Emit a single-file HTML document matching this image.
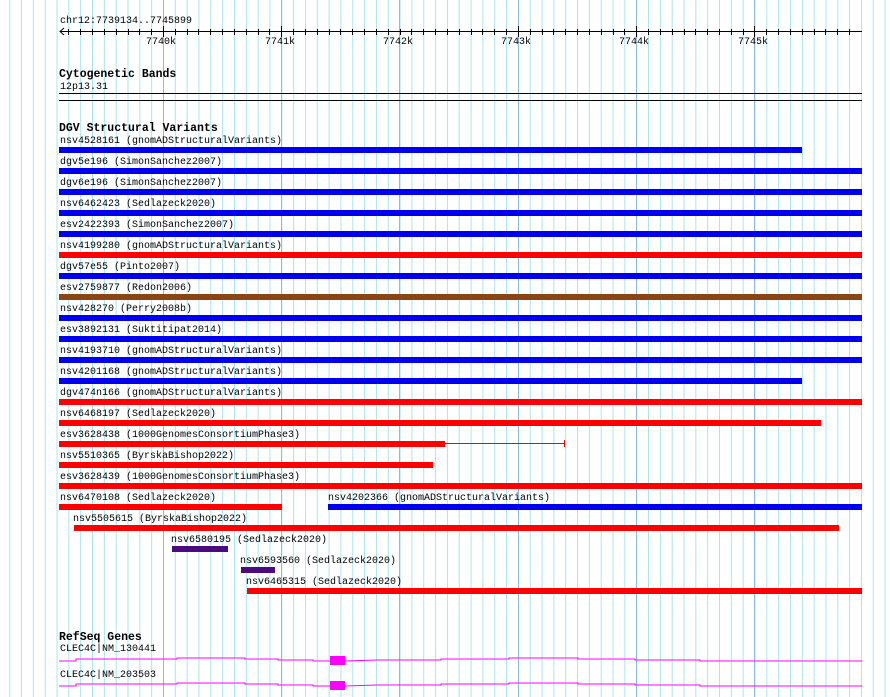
<!DOCTYPE html>
<html><head><meta charset="utf-8"><style>
body{margin:0;width:890px;height:697px;background:#fff;position:relative;overflow:hidden;font-family:"Liberation Mono",monospace;}
.t{position:absolute;font-size:10px;line-height:11px;white-space:pre;color:#000;margin-top:1px;}
.h{position:absolute;font-size:11.5px;line-height:12px;font-weight:bold;white-space:pre;margin-top:1px;}
.b{position:absolute;height:6px;}
.bl{background:#0000ee}.rd{background:#ff0000}.br{background:#8b4513}.pu{background:#4b0a80}
</style></head><body>
<svg width="890" height="697" style="position:absolute;left:0;top:0">
<defs><pattern id="g" x="9.2" y="0" width="11.83" height="697" patternUnits="userSpaceOnUse"><rect x="0" y="0" width="1" height="697" fill="#a8e6ee"/></pattern></defs>
<rect x="0" y="0" width="890" height="697" fill="url(#g)"/>
<g fill="#88bde0"><rect x="163" y="0" width="1" height="697"/><rect x="281" y="0" width="1" height="697"/><rect x="399" y="0" width="1" height="697"/><rect x="518" y="0" width="1" height="697"/><rect x="636" y="0" width="1" height="697"/><rect x="754" y="0" width="1" height="697"/></g>
<line x1="60" y1="31.5" x2="862" y2="31.5" stroke="#000"/>
<polyline points="64,28 60,31.5 64,35" fill="none" stroke="#000"/>
<g id="tk" stroke="#000"></g>
<line x1="59" y1="93.5" x2="862" y2="93.5" stroke="#000"/>
<line x1="59" y1="100.5" x2="862" y2="100.5" stroke="#000"/>
<line x1="445" y1="443.5" x2="565" y2="443.5" stroke="#ff0000"/>
<line x1="564.5" y1="440" x2="564.5" y2="447" stroke="#ff0000"/>
<polyline points="59,661 76,661 76,659 177,659 177,658 245,658 245,659 278,659 278,660 313,660 313,661 330,661 345,661 377,660 441,660 441,659 509,659 509,658 578,658 578,659 635,659 635,660 700,660 700,661 862,661" fill="none" stroke="#ff00ff"/>
<rect x="330" y="656" width="15" height="9" fill="#ff00ff"/>
<polyline points="59,686 76,686 76,684 177,684 177,683 245,683 245,684 278,684 278,685 313,685 313,686 330,686 345,686 377,685 441,685 441,684 509,684 509,683 578,683 578,684 635,684 635,685 700,685 700,686 862,686" fill="none" stroke="#ff00ff"/>
<rect x="330" y="681" width="15" height="9" fill="#ff00ff"/>
</svg>
<script>
var g=document.getElementById('tk'),s='';
for(var i=0;i<75;i++){var x=Math.round(9.2+11.83*i)+0.5;if(x<62||x>860)continue;var maj=[163,281,399,518,636,754].indexOf(Math.round(x-0.5))>=0;s+='<line x1="'+x+'" y1="'+(maj?26:29)+'" x2="'+x+'" y2="'+(maj?37:35)+'"/>';}
g.innerHTML=s;
</script>
<div class="t" style="left:60px;top:15px">chr12:7739134..7745899</div>
<div class="t" style="left:146px;top:36px">7740k</div>
<div class="t" style="left:265px;top:36px">7741k</div>
<div class="t" style="left:383px;top:36px">7742k</div>
<div class="t" style="left:501px;top:36px">7743k</div>
<div class="t" style="left:619px;top:36px">7744k</div>
<div class="t" style="left:738px;top:36px">7745k</div>
<div class="h" style="left:59px;top:68px">Cytogenetic Bands</div>
<div class="t" style="left:60px;top:81px">12p13.31</div>
<div class="h" style="left:59px;top:122px">DGV Structural Variants</div>

<div class="t" style="left:60px;top:135px">nsv4528161 (gnomADStructuralVariants)</div><div class="b bl" style="left:59px;top:147px;width:743px"></div>
<div class="t" style="left:60px;top:156px">dgv5e196 (SimonSanchez2007)</div><div class="b bl" style="left:59px;top:168px;width:803px"></div>
<div class="t" style="left:60px;top:177px">dgv6e196 (SimonSanchez2007)</div><div class="b bl" style="left:59px;top:189px;width:803px"></div>
<div class="t" style="left:60px;top:198px">nsv6462423 (Sedlazeck2020)</div><div class="b bl" style="left:59px;top:210px;width:803px"></div>
<div class="t" style="left:60px;top:219px">esv2422393 (SimonSanchez2007)</div><div class="b bl" style="left:59px;top:231px;width:803px"></div>
<div class="t" style="left:60px;top:240px">nsv4199280 (gnomADStructuralVariants)</div><div class="b rd" style="left:59px;top:252px;width:803px"></div>
<div class="t" style="left:60px;top:261px">dgv57e55 (Pinto2007)</div><div class="b bl" style="left:59px;top:273px;width:803px"></div>
<div class="t" style="left:60px;top:282px">esv2759877 (Redon2006)</div><div class="b br" style="left:59px;top:294px;width:803px"></div>
<div class="t" style="left:60px;top:303px">nsv428270 (Perry2008b)</div><div class="b bl" style="left:59px;top:315px;width:803px"></div>
<div class="t" style="left:60px;top:324px">esv3892131 (Suktitipat2014)</div><div class="b bl" style="left:59px;top:336px;width:803px"></div>
<div class="t" style="left:60px;top:345px">nsv4193710 (gnomADStructuralVariants)</div><div class="b bl" style="left:59px;top:357px;width:803px"></div>
<div class="t" style="left:60px;top:366px">nsv4201168 (gnomADStructuralVariants)</div><div class="b bl" style="left:59px;top:378px;width:743px"></div>
<div class="t" style="left:60px;top:387px">dgv474n166 (gnomADStructuralVariants)</div><div class="b rd" style="left:59px;top:399px;width:803px"></div>
<div class="t" style="left:60px;top:408px">nsv6468197 (Sedlazeck2020)</div><div class="b rd" style="left:59px;top:420px;width:762px"></div>
<div class="t" style="left:60px;top:429px">esv3628438 (1000GenomesConsortiumPhase3)</div><div class="b rd" style="left:59px;top:441px;width:386px"></div>
<div class="t" style="left:60px;top:450px">nsv5510365 (ByrskaBishop2022)</div><div class="b rd" style="left:59px;top:462px;width:374px"></div>
<div class="t" style="left:60px;top:471px">esv3628439 (1000GenomesConsortiumPhase3)</div><div class="b rd" style="left:59px;top:483px;width:803px"></div>
<div class="t" style="left:60px;top:492px">nsv6470108 (Sedlazeck2020)</div><div class="b rd" style="left:59px;top:504px;width:223px"></div>
<div class="t" style="left:328px;top:492px">nsv4202366 (gnomADStructuralVariants)</div><div class="b bl" style="left:328px;top:504px;width:534px"></div>
<div class="t" style="left:73px;top:513px">nsv5505615 (ByrskaBishop2022)</div><div class="b rd" style="left:74px;top:525px;width:765px"></div>
<div class="t" style="left:171px;top:534px">nsv6580195 (Sedlazeck2020)</div><div class="b pu" style="left:172px;top:546px;width:56px"></div>
<div class="t" style="left:240px;top:555px">nsv6593560 (Sedlazeck2020)</div><div class="b pu" style="left:241px;top:567px;width:34px"></div>
<div class="t" style="left:246px;top:576px">nsv6465315 (Sedlazeck2020)</div><div class="b rd" style="left:247px;top:588px;width:615px"></div>

<div class="h" style="left:59px;top:631px">RefSeq Genes</div>
<div class="t" style="left:60px;top:643px">CLEC4C|NM_130441</div>
<div class="t" style="left:60px;top:669px">CLEC4C|NM_203503</div>
</body></html>
